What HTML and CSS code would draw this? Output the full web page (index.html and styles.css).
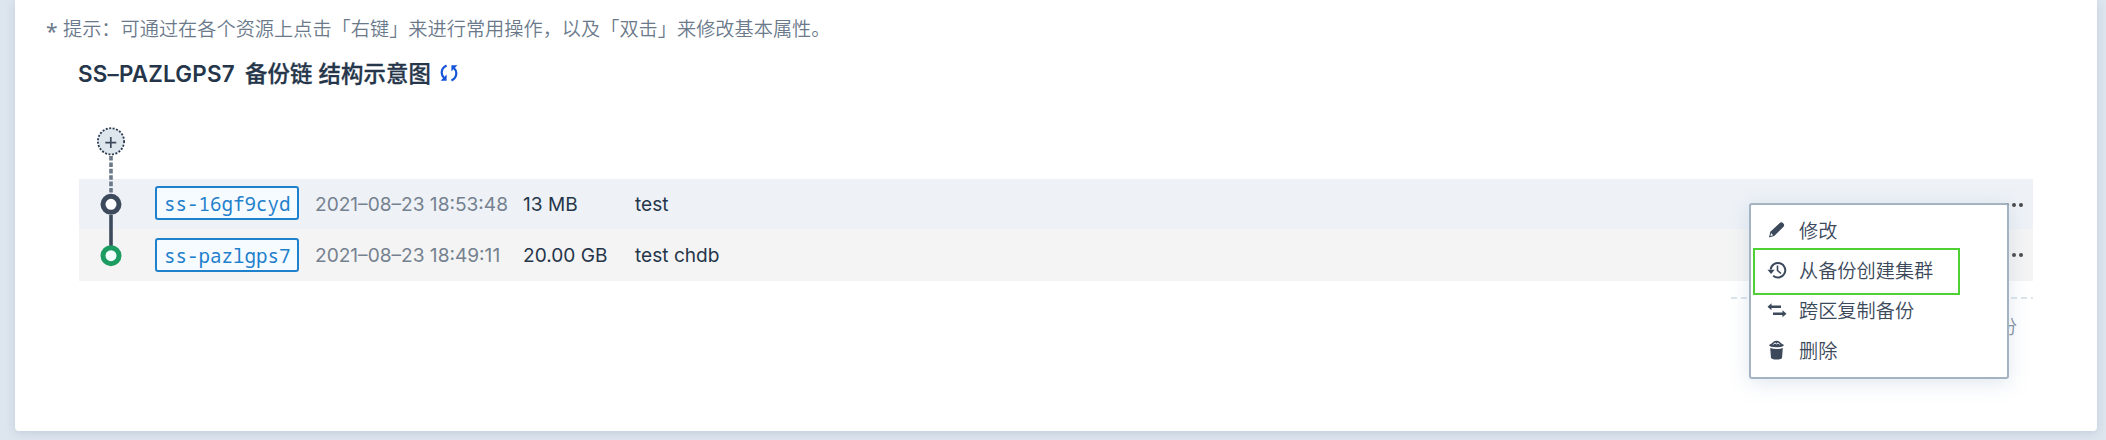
FILE: index.html
```html
<!DOCTYPE html>
<html lang="zh-CN">
<head>
<meta charset="utf-8">
<title>备份链</title>
<link rel="stylesheet" href="styles.css">
</head>
<body>
<main class="card">
  <p class="tip"><span class="star">*</span>提示：可通过在各个资源上点击「右键」来进行常用操作，以及「双击」来修改基本属性。</p>
  <section class="chain">
    <h1 class="chain-title"><span class="chain-id">SS–PAZLGPS7</span><span class="chain-text">备份链 结构示意图</span>
      <svg class="refresh" width="18" height="18" viewBox="0 0 18 18" fill="none" stroke="#1554d8" stroke-width="2.2">
        <path d="M6.6 1.6C1 4 .2 10.500 4.300 14.200M11.400 16.400C17 14 17.800 7.500 13.700 3.800"/>
        <path d="M6.600 10.500v6.200H.6zM11.400 7.500V1.300h6z" fill="#1554d8" stroke="none"/>
      </svg>
    </h1>
    <div class="rows">
      <div class="row row-active">
        <span class="tag">ss-16gf9cyd</span>
        <span class="time">2021–08–23 18:53:48</span>
        <span class="size">13 MB</span>
        <span class="name">test</span>
        <span class="more"><i></i><i></i><i></i></span>
      </div>
      <div class="row row-base">
        <span class="tag">ss-pazlgps7</span>
        <span class="time">2021–08–23 18:49:11</span>
        <span class="size">20.00 GB</span>
        <span class="name">test chdb</span>
        <span class="more"><i></i><i></i><i></i></span>
      </div>
      <svg class="graph" width="32" height="142" viewBox="0 0 32 142" fill="none">
        <path d="M16 29v38" stroke="#6b7887" stroke-width="3.6" stroke-dasharray="4.6 1.8"/>
        <path d="M16 88v33" stroke="#3d4a5c" stroke-width="3.6"/>
        <circle cx="16" cy="14.3" r="13.1" fill="#dee6ed" stroke="#2d3b50" stroke-width="1.8" stroke-dasharray="2 1.5"/>
        <path d="M10.3 15.6h11M15.8 10.1v11" stroke="#3d4a5c" stroke-width="1.7"/>
        <circle cx="16" cy="77.3" r="8" fill="#fff" stroke="#3d4a5c" stroke-width="5"/>
        <circle cx="16" cy="128.7" r="8" fill="#f2fffa" stroke="#1c9c60" stroke-width="5"/>
      </svg>
    </div>
    <div class="legend">份</div>
  </section>
</main>
<div class="menu">
  <div class="item">
    <svg width="20" height="20" viewBox="0 0 20 20"><path d="M2 17.400l1.300-5.600L12.800 2.900q1.500-1.300 3.400.3 1.800 1.800.3 3.600L7.200 16zM4.200 13l-.8 3 2.600-.8z" fill="#3b495b" fill-rule="evenodd"/></svg>
    <span>修改</span>
  </div>
  <div class="item item-marked">
    <svg width="20" height="20" viewBox="0 0 20 20" fill="none" stroke="#3b495b"><path d="M3.700 9.500A7.300 7.300 0 1 1 6.200 15.800" stroke-width="2"/><path d="M10.500 5.500v5l3.500 3" stroke-width="1.600"/><path d="M.5 9.800h7.200L4.100 14z" fill="#3b495b" stroke="none"/></svg>
    <span>从备份创建集群</span>
  </div>
  <div class="item">
    <svg width="20" height="20" viewBox="0 0 20 20" fill="#3b495b"><path d="M.5 6.700l4-3.500v2.200H14v2.600H4.500v2.200zM19.500 13.700l-4-3.500v2.200H6V15h9.500v2.200z"/></svg>
    <span>跨区复制备份</span>
  </div>
  <div class="item">
    <svg width="20" height="20" viewBox="0 0 20 20" fill="#3b495b"><path d="M2 5Q5 3.500 6.300 2 7 .8 9.500.8t3.300 1.200Q14 3.500 17 5 16.500 7.200 9.500 7.200T2 5zM3.200 8Q9.500 10.200 15.800 8L15 17.700Q14.500 19.500 9.500 19.500T4 17.700z"/><path d="M6.200 4.600l1.700-1.700 1.600 1 1.600-1 1.700 1.700" fill="none" stroke="#fff" stroke-width="1"/></svg>
    <span>删除</span>
  </div>
</div>
</body>
</html>
```
FILE: styles.css
```css
*, *::after { box-sizing: border-box; }
body {
  margin: 0;
  height: 440px;
  overflow: hidden;
  padding: 0 9px 9px 15px;
  background: #dde5ee;
  font-family: Inter, "Noto Sans CJK SC", sans-serif;
  font-size: 19.2px;
  color: #26364a;
}
.card {
  height: 431px;
  padding: 13px 64px 0 32px;
  background: #fff;
  border-radius: 0 0 4px 4px;
  box-shadow: 0 2px 8px rgba(130, 155, 180, .3);
}
.tip {
  display: flex;
  margin: 0;
  height: 30px;
  line-height: 30px;
  color: #6b7a8b;
  font-family: "Noto Sans CJK SC", sans-serif;
  font-weight: 350;
  white-space: nowrap;
}
.star { width: 17px; margin-left: -1px; padding-top: 3px; font-family: "Noto Sans", sans-serif; font-size: 21px; font-weight: 400; }
.chain { padding-left: 31px; }
.chain-title {
  display: flex;
  align-items: center;
  margin: 14px 0 0;
  height: 32px;
  font-size: 22.4px;
  line-height: 34px;
  font-weight: 600;
  white-space: pre;
}
.chain-title span { height: 32px; }
.chain-id { width: 167px; letter-spacing: .2px; }
.chain-text { letter-spacing: .1px; font-weight: 500; -webkit-text-stroke: .3px #26364a; }
.refresh { margin-left: 9px; }
.rows { position: relative; margin: 90px 0 0 1px; }
.row {
  display: flex;
  align-items: center;
  padding: 0 10px 0 76px;
  white-space: nowrap;
}
.row-active { height: 50px; padding-bottom: 3px; background: #eef2f7; }
.row-base { height: 52px; padding-bottom: 1px; background: #f4f4f4; }
.tag {
  width: 144px;
  height: 34px;
  padding-left: 7px;
  border: 2px solid #1f80cc;
  border-radius: 3px;
  background: #f6fbff;
  color: #1f80cc;
  font-family: "Noto Sans Mono", "DejaVu Sans Mono", monospace;
  line-height: 32px;
}
.time, .size, .name { padding-top: 3px; font-size: 19.1px; }
.row-base .time, .row-base .size, .row-base .name { padding-top: 0; }
.time { width: 224px; padding-left: 16px; color: #75818f; }
.size { width: 112px; }
.more { display: flex; gap: 3px; margin-left: auto; padding-top: 4px; }
.row-base .more { padding-top: 0; }
.more i { width: 4px; height: 4px; border-radius: 50%; background: #4a4a4a; }
.graph { position: absolute; left: 16px; top: -52px; }
.legend {
  width: 302px;
  margin: 16px 0 0 auto;
  padding: 15px 16px 0 0;
  background: repeating-linear-gradient(90deg, #dce5ed 0 6px, transparent 6px 10px) top / 100% 2px no-repeat;
  color: #84919f;
  font-weight: 350;
  line-height: 30px;
  text-align: right;
}
.menu {
  position: absolute;
  left: 1749px;
  top: 203px;
  width: 260px;
  height: 176px;
  padding: 5px 2px;
  background: #fff;
  border: 2px solid #a3b3c2;
  border-radius: 3px;
  box-shadow: 0 4px 20px rgba(130, 160, 190, .25);
  color: #3b495b;
  font-weight: 350;
}
.item {
  position: relative;
  display: flex;
  align-items: center;
  gap: 12px;
  height: 40px;
  padding-left: 14px;
}
.item-marked::after {
  content: "";
  position: absolute;
  left: 0;
  top: -2px;
  width: 207px;
  height: 47px;
  border: 2px solid #4fd034;
}
```
